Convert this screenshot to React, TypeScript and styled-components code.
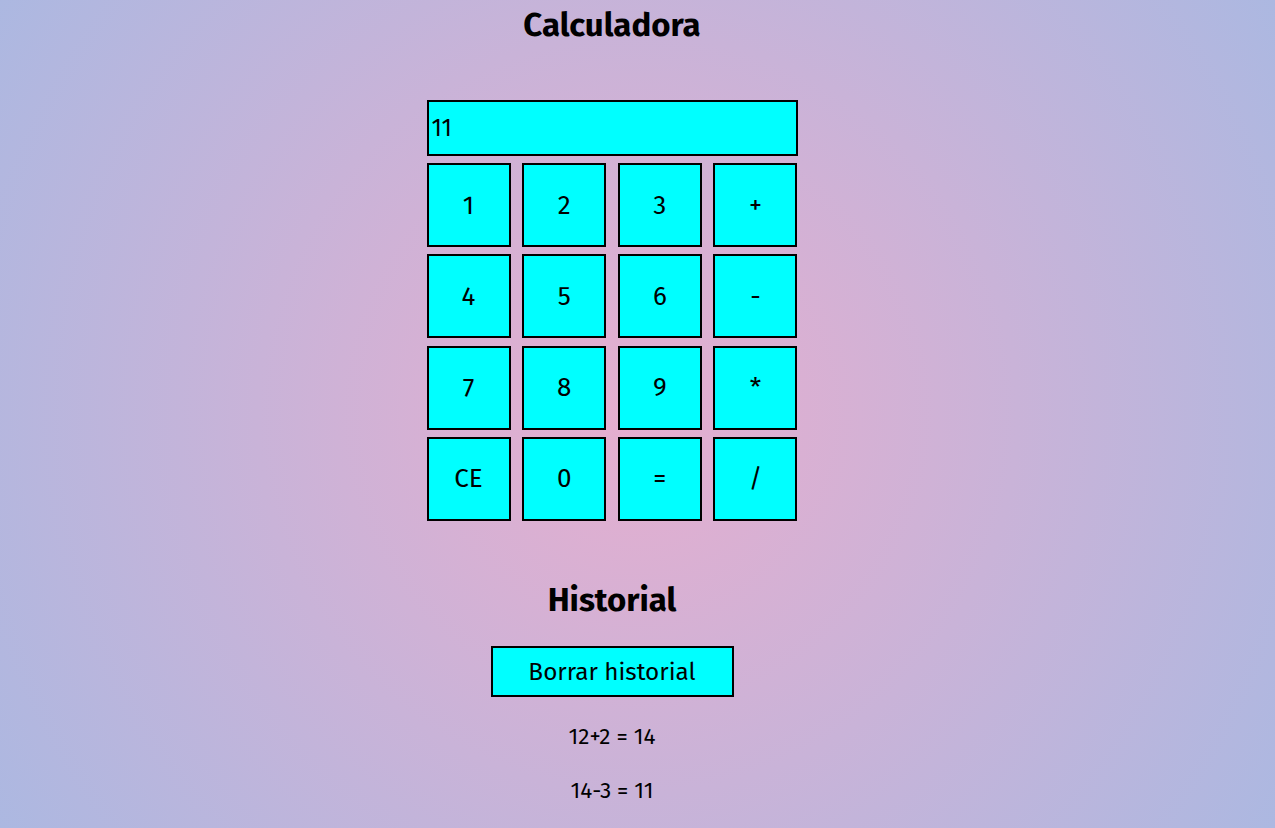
import React, { useState } from "react";
import styled, { createGlobalStyle } from "styled-components";

const GlobalStyle = createGlobalStyle`
  html, body {
    margin: 0;
    padding: 0;
  }
  body {
    font-family: "Fira Sans", "Open Sans", "Noto Sans", sans-serif;
    color: #000;
  }
`;

const Page = styled.div`
  box-sizing: border-box;
  min-height: 100vh;
  padding-right: 51px;
  display: flex;
  flex-direction: column;
  align-items: center;
  background: radial-gradient(circle at center, #e6aecf 0%, #acb8e1 100%);
`;

const Title = styled.h1`
  margin: 6px 0 0;
  font-size: 33px;
  line-height: 38px;
  font-weight: 700;
`;

const Calculator = styled.div`
  margin-top: 56px;
  width: 371px;
  display: flex;
  flex-direction: column;
  gap: 7px;
`;

const Display = styled.div`
  box-sizing: border-box;
  height: 56px;
  border: 2px solid #000;
  background: #00ffff;
  display: flex;
  align-items: center;
  padding-left: 3px;
  font-size: 24px;
`;

const Keys = styled.div`
  display: grid;
  grid-template-columns: repeat(4, 84px);
  grid-auto-rows: 84px;
  justify-content: space-between;
  row-gap: 7.33px;
`;

const Key = styled.button`
  box-sizing: border-box;
  border: 2px solid #000;
  background: #00ffff;
  font-family: inherit;
  font-size: 26px;
  color: #000;
  padding: 0;
  display: flex;
  align-items: center;
  justify-content: center;
  cursor: pointer;
`;

const SubTitle = styled.h2`
  margin: 59px 0 0;
  font-size: 33px;
  line-height: 40px;
  font-weight: 700;
`;

const ClearButton = styled.button`
  box-sizing: border-box;
  margin-top: 26px;
  width: 243px;
  height: 51px;
  border: 2px solid #000;
  background: #00ffff;
  font-family: inherit;
  font-size: 24.3px;
  color: #000;
  padding: 0;
  cursor: pointer;
`;

const HistoryList = styled.ul`
  list-style: none;
  margin: 27px 0 0;
  padding: 0;
  display: flex;
  flex-direction: column;
  align-items: center;
  gap: 28px;
`;

const HistoryItem = styled.li`
  font-size: 22.5px;
  line-height: 26px;
`;

const keys = ["1", "2", "3", "+", "4", "5", "6", "-", "7", "8", "9", "*", "CE", "0", "=", "/"];

export default function App() {
  const [value] = useState("11");
  const history = ["12+2 = 14", "14-3 = 11"];
  return (
    <>
      <GlobalStyle />
      <Page>
        <Title>Calculadora</Title>
        <Calculator>
          <Display>{value}</Display>
          <Keys>
            {keys.map((k) => (
              <Key key={k}>{k}</Key>
            ))}
          </Keys>
        </Calculator>
        <SubTitle>Historial</SubTitle>
        <ClearButton>Borrar historial</ClearButton>
        <HistoryList>
          {history.map((h) => (
            <HistoryItem key={h}>{h}</HistoryItem>
          ))}
        </HistoryList>
      </Page>
    </>
  );
}
